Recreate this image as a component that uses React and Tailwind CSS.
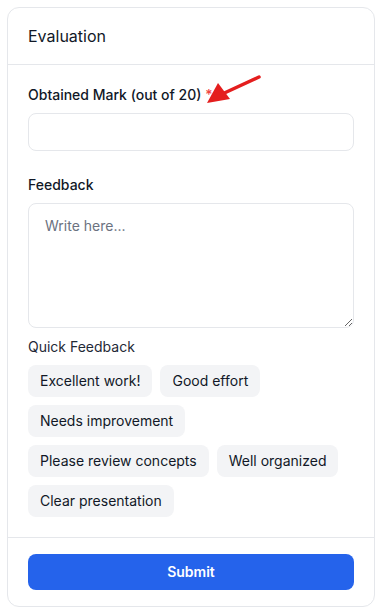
export default function App() {
  const chips = [
    "Excellent work!",
    "Good effort",
    "Needs improvement",
    "Please review concepts",
    "Well organized",
    "Clear presentation",
  ];
  return (
    <div className="relative min-h-[610px] bg-white p-[7px] font-['Inter',sans-serif]">
      <div className="w-[368px] rounded-xl border border-[#e5e7eb] bg-white">
        <div className="border-b border-[#e5e7eb] px-5 py-4">
          <h2 className="text-base leading-6 text-[#111827]">Evaluation</h2>
        </div>
        <div className="px-5 pt-5 pb-5">
          <label className="mb-2 block text-sm font-medium leading-5 text-[#111827]">
            Obtained Mark (out of 20) <span className="text-[#ef4444]">*</span>
          </label>
          <input
            type="text"
            className="block h-[38px] w-full rounded-lg border border-[#e5e7eb] px-4 py-2 text-sm outline-none"
          />
          <label className="mt-6 mb-2 block text-sm font-medium leading-5 text-[#111827]">
            Feedback
          </label>
          <textarea
            placeholder="Write here..."
            className="block h-[125px] w-full rounded-lg border border-[#e5e7eb] px-4 py-3 text-sm leading-5 text-[#111827] outline-none placeholder:text-[#6b7280]"
          />
          <p className="mt-[9px] mb-2 text-sm leading-5 text-[#1f2937]">Quick Feedback</p>
          <div className="flex flex-wrap gap-2">
            {chips.map((c) => (
              <button
                key={c}
                type="button"
                className="rounded-lg bg-[#f3f4f6] px-3 py-1.5 text-sm leading-5 text-[#111827]"
              >
                {c}
              </button>
            ))}
          </div>
        </div>
        <div className="border-t border-[#e5e7eb] px-5 py-4">
          <button
            type="button"
            className="block h-9 w-full rounded-lg bg-[#2563eb] text-sm font-semibold text-white"
          >
            Submit
          </button>
        </div>
      </div>
      <svg
        className="pointer-events-none absolute left-0 top-0"
        width="387"
        height="610"
        viewBox="0 0 387 610"
      >
        <line x1="259" y1="77" x2="220" y2="95" stroke="#e41e1e" strokeWidth="3.5" strokeLinecap="round" />
        <polygon points="207,103 218,83 230,99" fill="#e41e1e" />
      </svg>
    </div>
  );
}
